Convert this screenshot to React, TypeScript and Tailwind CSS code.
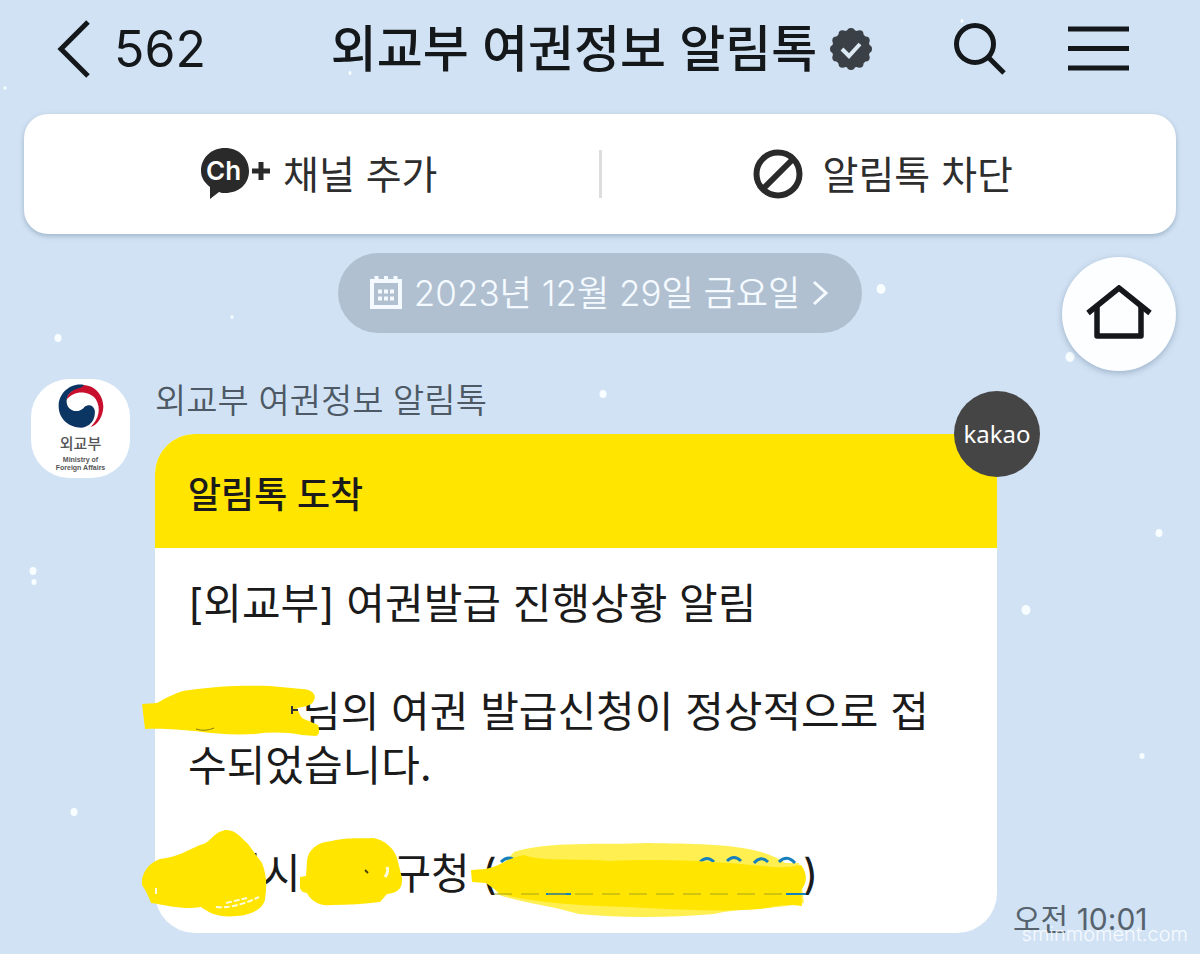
import type { ReactNode } from "react"

const snow = [
    { x: 5, y: 88, r: 2 },
    { x: 350, y: 73, r: 2 },
    { x: 962, y: 21, r: 2 },
    { x: 232, y: 317, r: 2 },
    { x: 58, y: 338, r: 4 },
    { x: 881, y: 289, r: 5 },
    { x: 1070, y: 357, r: 5 },
    { x: 603, y: 394, r: 4 },
    { x: 1159, y: 533, r: 4 },
    { x: 33, y: 571, r: 4 },
    { x: 34, y: 582, r: 3 },
    { x: 1026, y: 610, r: 5 },
    { x: 1142, y: 756, r: 3 },
    { x: 74, y: 812, r: 4 },
]

function Snow() {
    return (
        <svg className="absolute inset-0 w-full h-full" fill="#f8fdff" aria-hidden="true">
            {snow.map((flake) => (
                <ellipse key={`${flake.x}-${flake.y}`} cx={flake.x} cy={flake.y} rx={flake.r - 0.5} ry={flake.r} />
            ))}
        </svg>
    )
}

function Header() {
    return (
        <header className="flex items-center h-[98px] px-14">
            <div className="flex-1">
                <button type="button" className="flex items-center gap-[22px]" aria-label="뒤로, 562">
                    <svg width="36" height="58" viewBox="0 0 36 58" fill="none" stroke="#15181b" strokeWidth="5">
                        <path d="M32 2 5 29l27 27" />
                    </svg>
                    <span className="text-[50px] leading-none">562</span>
                </button>
            </div>
            <div className="flex items-center gap-3 pl-1">
                <h1 className="text-[50px] leading-none font-medium whitespace-nowrap">외교부 여권정보 알림톡</h1>
                <svg width="44" height="44" viewBox="0 0 44 44" aria-hidden="true">
                    <g fill="#3a4046">
                        <circle cx="22" cy="22" r="19" />
                        <circle cx="22" cy="5" r="4" />
                        <circle cx="30.500" cy="7.300" r="4" />
                        <circle cx="36.700" cy="13.500" r="4" />
                        <circle cx="39" cy="22" r="4" />
                        <circle cx="36.700" cy="30.500" r="4" />
                        <circle cx="30.500" cy="36.700" r="4" />
                        <circle cx="22" cy="39" r="4" />
                        <circle cx="13.500" cy="36.700" r="4" />
                        <circle cx="7.300" cy="30.500" r="4" />
                        <circle cx="5" cy="22" r="4" />
                        <circle cx="7.300" cy="13.500" r="4" />
                        <circle cx="13.500" cy="7.300" r="4" />
                    </g>
                    <path fill="none" stroke="#dce8f3" strokeWidth="4" d="m13 22 7 7 11-12" />
                </svg>
            </div>
            <div className="flex-1 flex items-center justify-end gap-[61px]">
                <button type="button" aria-label="검색">
                    <svg width="54" height="54" viewBox="0 0 54 54" fill="none" stroke="#15181b" strokeWidth="5">
                        <circle cx="22" cy="22" r="18.500" />
                        <path d="m35 35 16 16" />
                    </svg>
                </button>
                <button type="button" className="mr-[15px]" aria-label="메뉴">
                    <svg width="61" height="46" viewBox="0 0 61 46" stroke="#15181b" strokeWidth="5">
                        <path d="M0 3h61M0 22.500h61M0 42h61" />
                    </svg>
                </button>
            </div>
        </header>
    )
}

function ChannelBar() {
    return (
        <div className="flex items-center h-[120px] mx-6 mt-4 rounded-3xl bg-white text-[#2e2e2e] shadow-[0_2px_5px_rgba(60,90,120,0.35)]">
            <button type="button" className="w-1/2 flex items-center justify-center gap-3 pl-4">
                <svg width="70" height="54" viewBox="0 0 70 54" aria-hidden="true">
                    <path fill="#2a2a2a" d="M24 1c14 0 24 10 24 23S38 46 24 46c-2 0-4 0-6-1l-9 7V40C4 36 0 31 0 24 0 11 10 1 24 1Z" />
                    <text x="5" y="33" fill="#fff" fontSize="26" fontWeight="600" fontFamily="Inter, sans-serif">Ch</text>
                    <path stroke="#2a2a2a" strokeWidth="5" d="M51 24h18M60 15v18" />
                </svg>
                <span className="text-[39px] leading-none whitespace-nowrap">채널 추가</span>
            </button>
            <span className="shrink-0 w-[3px] h-12 bg-[#dddddd]" />
            <button type="button" className="w-1/2 flex items-center justify-center gap-5 pr-3">
                <svg width="50" height="50" viewBox="0 0 50 50" fill="none" stroke="#2a2a2a" strokeWidth="6" aria-hidden="true">
                    <circle cx="25" cy="25" r="21.500" />
                    <path d="m11 39 28-28" />
                </svg>
                <span className="text-[39px] leading-none whitespace-nowrap">알림톡 차단</span>
            </button>
        </div>
    )
}

function DateButton() {
    return (
        <button type="button" className="flex items-center h-20 px-8 mx-auto mt-[19px] rounded-full bg-[#b0c0d0] text-[#f4faff]">
            <svg width="32" height="34" viewBox="0 0 32 34" fill="none" stroke="currentColor" strokeWidth="4" aria-hidden="true">
                <path d="M2 5h28v26H2zM6.500 0v5M16 0v5M25.500 0v5" />
                <path strokeDasharray="4 2" d="M8 15.500h16M8 22.500h16" />
            </svg>
            <span className="ml-3 text-[35px] leading-none font-[350] whitespace-nowrap">2023년 12월 29일 금요일</span>
            <svg className="ml-3" width="18" height="26" viewBox="0 0 18 26" fill="none" stroke="currentColor" strokeWidth="3" aria-hidden="true">
                <path d="m2 2 12 11L2 24" />
            </svg>
        </button>
    )
}

function HomeButton() {
    return (
        <button
            type="button"
            aria-label="홈"
            className="absolute right-6 top-[257px] flex items-center justify-center size-[114px] rounded-full bg-[#fcfeff] shadow-[0_2px_6px_rgba(60,90,120,0.35)]"
        >
            <svg width="66" height="58" viewBox="0 0 66 58" fill="none" stroke="#15181b" strokeWidth="5.500">
                <path d="M2 28 33 3l31 25" />
                <path strokeLinejoin="round" d="M11 22v29h44V22" />
            </svg>
        </button>
    )
}

function Avatar() {
    return (
        <div className="flex flex-col items-center shrink-0 size-[99px] pt-[5px] rounded-[38px] bg-white text-[#555555]">
            <svg width="46" height="44" viewBox="112 40 138 132" aria-hidden="true">
                <path fill="#c8102e" d="M136 90C140 62 165 52 188 43C225 45 248 75 248 108C247 140 230 162 210 169C235 145 242 112 225 85C208 62 160 55 136 90Z" />
                <path fill="#0b3562" d="M190 43C150 35 113 68 114 107C114 145 145 171 182 171C210 168 226 145 222 118C218 102 203 100 192 108C180 124 158 126 145 112C132 95 136 70 160 58C172 52 185 52 190 43Z" />
            </svg>
            <span className="mt-2 text-[15px] leading-4 font-medium">외교부</span>
            <span className="mt-1 text-[7px] leading-2 text-center font-['Liberation_Sans',sans-serif] font-bold">
                Ministry of
                <br />
                Foreign Affairs
            </span>
        </div>
    )
}

// Keeps the room of the hidden words and lets the marker stroke spill over its neighbours
function Redacted({ width, className, viewBox, children }: { width: string; className: string; viewBox: string; children: ReactNode }) {
    return (
        <span className={`relative inline-block h-[54px] align-bottom ${width}`}>
            <svg className={`absolute max-w-none ${className}`} viewBox={viewBox} fill="#ffe500" aria-hidden="true">
                {children}
            </svg>
        </span>
    )
}

function Message() {
    return (
        <div className="px-[33px] pt-[29px] pb-8 text-[42px] leading-[54px] text-[#1b1b1b]">
            <p>[외교부] 여권발급 진행상황 알림</p>
            <p className="mt-[54px]">
                <Redacted width="w-[114px]" className="-left-[48px] -top-[2px] w-[180px] h-14" viewBox="140 682 180 56">
                    <path d="M142 703L157 702C168 696 178 690 190 689C215 685 245 684 270 685L302 688C312 688 317 694 314 699C313 704 305 706 297 707C299 712 301 717 304 718L318 724Q321 733 316 735L302 734C285 731 270 731 255 733C235 734 215 733 195 730C180 729 165 727 145 728Z" />
                    <path fill="none" stroke="#333" strokeWidth="2" d="M292 705v8M292 709h6" />
                    <path fill="none" stroke="#8a7d10" d="M196 728q9 3 18-1" />
                </Redacted>
                님의 여권 발급신청이 정상적으로 접수되었습니다.
            </p>
            <p className="mt-[54px]">
                <Redacted width="w-[74px]" className="-left-[48px] -top-[18px] w-32 h-[90px]" viewBox="140 828 128 90">
                    <path fill="none" stroke="#1b1b1b" strokeWidth="3" d="M255 852v10" />
                    <path d="M142 878C145 866 152 861 160 858C178 856 188 849 200 844C211 842 212 832 225 829C236 828 242 838 248 843L262 862C267 875 267 886 265 898C264 907 252 914 237 915C219 917 209 912 201 906C185 909 170 905 151 902Q147 891 142 884Z" />
                    <path fill="none" stroke="#fffce0" strokeWidth="2" strokeDasharray="6 2" d="M156 887v7M216 906q18 2 43-10M226 902l21-5" />
                </Redacted>
                시{" "}
                <Redacted width="w-20" className="-left-3 -top-[15px] w-26 h-20" viewBox="301 832 104 80">
                    <path d="M308 861C309 849 319 842 333 841C348 837 364 839 373 838C385 839 397 849 399 862L403 878C404 889 398 893 388 894L381 902C365 904 350 905 333 905C318 907 310 898 308 893Q298 893 301 877L307 876Z" />
                    <path fill="none" stroke="#fffce0" strokeWidth="3" d="M388 867q2 5-2 10" />
                    <path fill="none" stroke="#4b440b" strokeWidth="2" d="m366 870 3 3" />
                </Redacted>
                구청 (
                <a href="tel:" aria-label="전화번호">
                    <Redacted width="w-[306px]" className="-left-[28px] -top-[7px] w-[338px] h-20" viewBox="470 840 338 80">
                        <path fill="#ffef50" d="M515 852C550 841 600 845 650 843C700 844 760 843 786 863H800L805 903C770 910 740 908 715 914C670 918 620 918 580 914C550 905 525 903 500 895L490 880Z" />
                        <path fill="none" stroke="#1680bd" strokeWidth="3" d="M502 862q6-6 12-3M701 862q7-7 14 0M728 861q7-7 14 0M755 863q7-8 14-1M780 862q8-8 16 1M503 888q5 3 10 0" />
                        <path d="M472 870L486 869C501 867 508 858 525 855C545 862 580 858 610 861C670 858 720 862 765 866Q785 869 802 865C809 874 808 884 802 890L803 906Q784 903 769 908C720 914 650 907 600 906C555 904 522 899 502 894L487 883L473 882Z" />
                        <path fill="none" stroke="#1680bd" strokeWidth="2" d="M787 894h20M547 894h25" />
                        <path fill="none" stroke="#a5a21e" d="M495 894h292" strokeDasharray="18 9" />
                    </Redacted>
                </a>
                )
            </p>
        </div>
    )
}

export default function App() {
    return (
        <div className="relative min-h-screen overflow-hidden bg-[#d1e2f4] text-[#15181b] font-[Inter,'Noto_Sans_CJK_KR',sans-serif]">
            <Snow />
            <div className="relative flex flex-col pb-[21px]">
                <Header />
                <ChannelBar />
                <DateButton />
                <main className="flex mt-[46px] pl-[31px] pr-[53px]">
                    <Avatar />
                    <div className="flex-1 ml-[25px]">
                        <h2 className="text-[34px] leading-[44px] font-[350] text-[#4d5964]">외교부 여권정보 알림톡</h2>
                        <div className="flex items-end gap-4 mt-[11px]">
                            <article className="relative flex-1 rounded-[40px] rounded-tr-none bg-white">
                                <h3 className="flex items-center h-[114px] px-[33px] pt-2 rounded-tl-[40px] bg-[#ffe500] text-[36px] font-medium text-[#1b1b1b]">
                                    알림톡 도착
                                </h3>
                                <Message />
                                <span className="absolute -right-[43px] -top-[43px] flex items-center justify-center size-[86px] rounded-full bg-[#454545] text-white text-[24px] font-['Noto_Sans',sans-serif]">
                                    kakao
                                </span>
                            </article>
                            <time className="w-[134px] text-[30px] leading-7 whitespace-nowrap text-[#56626d]">오전 10:01</time>
                        </div>
                    </div>
                </main>
            </div>
            <HomeButton />
            <span className="absolute right-3 bottom-2 text-[20px] leading-6 font-light text-white/80">sminmoment.com</span>
        </div>
    )
}
